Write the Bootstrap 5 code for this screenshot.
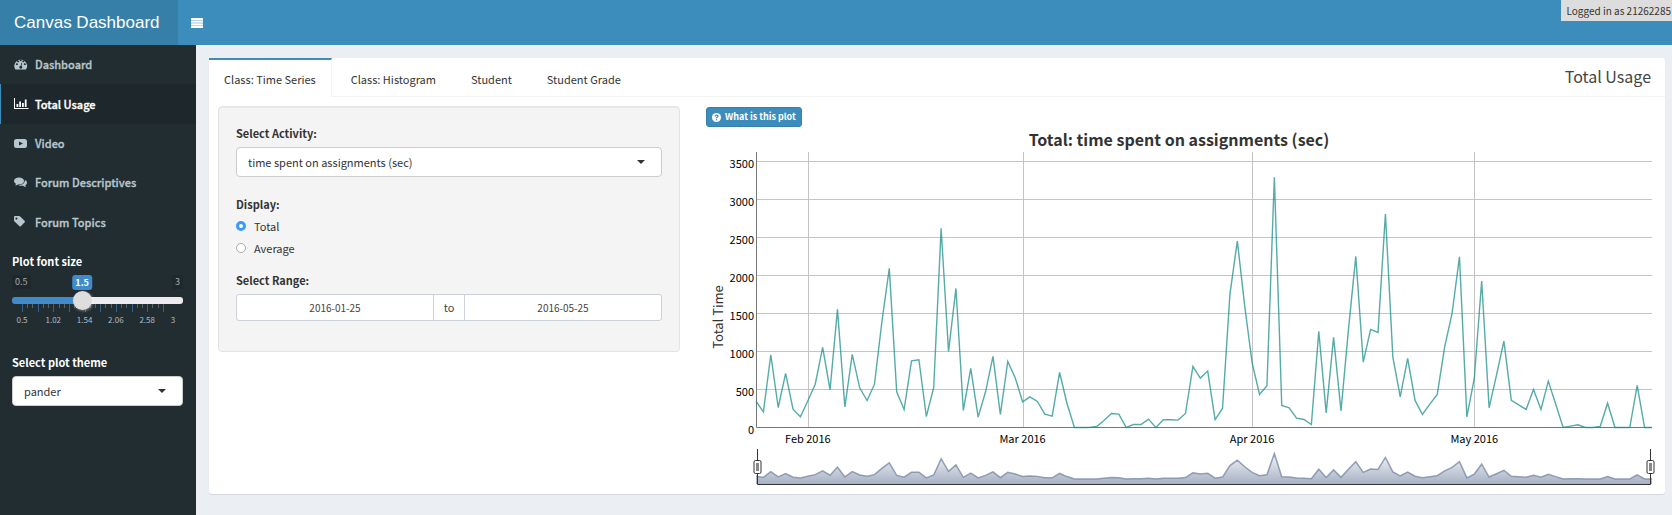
<!DOCTYPE html>
<html lang="en">
<head>
<meta charset="utf-8">
<meta name="viewport" content="width=device-width, initial-scale=1">
<title>Canvas Dashboard</title>
<link href="https://cdn.jsdelivr.net/npm/bootstrap@5.3.0/dist/css/bootstrap.min.css" rel="stylesheet">
<style>
  :root { --brand: #3c8dbc; --brand-dark: #367fa9; }
  body { font-family: "Noto Sans CJK SC", "Source Sans Pro", sans-serif; font-size: 11px; line-height: 18px; color: #333; background: #ebeef3; }
  .app-header { height: 45px; background: var(--brand); }
  .app-logo { width: 178px; background: var(--brand-dark); color: #fff; font: 17px/45px "Liberation Sans", Arial, sans-serif; padding-left: 14px; }
  .menu-toggle { color: #fff; padding: 0 13px; border: 0; background: none; }
  .login-note { background: #ddd; font-size: 10px; height: 21px; line-height: 21px; padding: 0 1px 0 5px; color: #333; }
  .app-side { width: 196px; background: #222d32; color: #fff; }
  .side-menu { height: 197px; }
  .side-menu a { color: #b8c7ce; font-weight: 500; -webkit-text-stroke: 0.3px; border-left: 1px solid transparent; padding-left: 13px; padding-bottom: 1px; text-decoration: none; }
  .side-menu a.active { color: #fff; background: #1e282c; border-left-color: var(--brand); }
  .side-menu svg { width: 15px; height: 13px; margin-right: 6px; flex: none; }
  .side-form { padding: 10px 13px 0 12px; }
  .side-form label, .filters .caption { font-weight: 700; display: block; }
  .side-form .theme-label { margin-top: 25px; }
  .pick { font-size: 11px; line-height: 18px; height: 30px; margin-top: 5px; padding: 0 30px 0 11px; border: 1px solid #ccc; border-radius: 4px; color: #333;
    background-image: url("data:image/svg+xml,%3Csvg xmlns='http://www.w3.org/2000/svg' viewBox='0 0 8 4'%3E%3Cpath d='M0 0h8L4 4z' fill='%23333'/%3E%3C/svg%3E");
    background-size: 8px 4px; background-position: right 16px center; }
  .scale-head { height: 16px; margin-top: 5px; font-size: 9px; line-height: 14px; color: #aaa; position: relative; }
  .scale-head span { background: #1e282c; border-radius: 3px; padding: 0 3px; height: 14px; }
  .scale-head output { position: absolute; top: 0; transform: translateX(-50%); background: #428bca; color: #fff; border-radius: 3px; padding: 0 3px; font-size: 9px; font-weight: 700; line-height: 15px; }
  .size-range { appearance: none; -webkit-appearance: none; display: block; width: 100%; height: 19px; margin: 0; background: none; position: relative; z-index: 1; }
  .size-range::-webkit-slider-runnable-track { height: 7px; border-radius: 3px; background: linear-gradient(to right, #428bca 40%, #edeaee 40%); }
  .size-range::-webkit-slider-thumb { -webkit-appearance: none; width: 19px; height: 19px; margin-top: -6px; border-radius: 50%; background: #dedede; box-shadow: 1px 1px 3px rgba(255,255,255,.4); }
  .ticks { display: block; width: 100%; height: 24px; margin-top: -6px; overflow: visible; }
  .panel-box { background: #fff; border-radius: 3px; box-shadow: 0 1px 1px rgba(0,0,0,.1); margin: 13px 7px 0 13px; }
  .panel-tabs { border-bottom: 1px solid #f4f4f4; height: 39px; }
  .panel-tabs .tab-link { border: 0; border-top: 2px solid transparent; border-right: 1px solid transparent; background: none; color: #333; padding: 9px 15px 10px; margin-right: 4px; height: 39px; line-height: 20px; }
  .panel-tabs .tab-link.active { border-top-color: var(--brand); border-right-color: #f4f4f4; background: #fff; }
  .panel-title { font-size: 16px; line-height: 36px; margin: 0 14px 0 auto; color: #444; font-weight: 400; }
  .panel-body { padding: 9px; }
  .panel-row { --bs-gutter-x: 26px; }
  .filters { background: #f4f4f4; border: 1px solid #e3e3e3; border-radius: 4px; padding: 17px 17px 30px; box-shadow: inset 0 1px 1px rgba(0,0,0,.05); }
  .filters .display-caption { margin-top: 18px; }
  .filters .display-group { padding: 2px 0 4px; }
  .filters .form-radio { height: 22px; }
  .filters input[type=radio] { appearance: none; width: 10px; height: 10px; margin: 0 8px 0 0; border: 1px solid #aaa; border-radius: 50%; background: #fff; }
  .filters input[type=radio]:checked { border: 3px solid #3b99fc; }
  .date-range { border: 1px solid #ccd0da; border-radius: 3px; background: #fff; height: 27px; margin-top: 5px; overflow: hidden; }
  .date-range input { border: 0; text-align: center; font-size: 10px; color: #444; min-width: 0; width: 0; background: none; padding: 0; }
  .date-range span { border: solid #ccd0da; border-width: 0 1px; width: 32px; line-height: 25px; text-align: center; color: #444; }
  .help-btn { background: var(--brand); border: 1px solid var(--brand-dark); color: #fff; border-radius: 3px; font-size: 9px; font-weight: 700; line-height: 18px; height: 20px; padding: 0 5px; margin-top: 1px; }
  .plot { display: block; width: 100%; height: 358px; }
  .plot text { font-size: 11px; fill: #000; }
  .plot .plot-title { font-size: 16px; font-weight: 700; fill: #333; }
  .plot .axis-title { font-size: 13px; fill: #333; }
</style>
</head>
<body>
<div class="d-flex flex-column min-vh-100">
  <header class="app-header d-flex">
    <div class="app-logo">Canvas Dashboard</div>
    <button class="menu-toggle d-flex align-items-center" type="button" aria-label="Toggle menu">
      <svg width="12" height="10" viewBox="0 0 12 10" fill="currentColor"><rect width="12" height="2.2" rx=".5"/><rect y="2.6" width="12" height="2.2" rx=".5"/><rect y="5.2" width="12" height="2.2" rx=".5"/><rect y="7.8" width="12" height="2.2" rx=".5"/></svg>
    </button>
    <div class="login-note ms-auto">Logged in as 21262285</div>
  </header>
  <div class="d-flex flex-grow-1">
    <aside class="app-side flex-shrink-0">
      <nav class="side-menu d-flex flex-column">
        <a href="#" class="d-flex flex-fill align-items-center"><svg viewBox="0 0 15 13"><path fill="currentColor" fill-rule="evenodd" d="M1.4 11.5A6.3 6.3 0 1 1 12 11.5zM2.9 7.1a.9.9 0 1 0-.01 0zM4.1 4.3a.9.9 0 1 0-.01 0zM6.7 3.2a.9.9 0 1 0-.01 0zM9.3 4.3a.9.9 0 1 0-.01 0zM10.8 7.1a.9.9 0 1 0-.01 0zM7.4 4.7 6.6 7.9a1.4 1.4 0 1 0 .9.2l.6-3.2z"/></svg>Dashboard</a>
        <a href="#" class="active d-flex flex-fill align-items-center"><svg viewBox="0 0 15 13"><path fill="currentColor" d="M0 1h1v10h13.500v1H0zM2.500 7h1.800v3H2.500zM5.200 4.500H7V10H5.200zM8 6h1.800v4H8zM10.800 2.500h1.800V10h-1.800z"/></svg>Total Usage</a>
        <a href="#" class="d-flex flex-fill align-items-center"><svg viewBox="0 0 15 13"><path fill="currentColor" fill-rule="evenodd" d="M2.500 2h8q2.500 0 2.500 2.500v4Q13 11 10.500 11h-8Q0 11 0 8.500v-4Q0 2 2.500 2zM5 4.500v4L9 6.500z"/></svg>Video</a>
        <a href="#" class="d-flex flex-fill align-items-center"><svg viewBox="0 0 15 13"><path fill="currentColor" d="M5 1.500c2.900 0 5 1.500 5 3.500S7.900 8.500 5 8.500l-1-.1C3 9.200 2 9.500 1 9.500c.5-.4.9-1 1-1.700C.8 7.100 0 6.100 0 5c0-2 2.200-3.500 5-3.500zM10.900 4c1.300.6 2.100 1.500 2.100 2.700 0 1-.7 1.900-1.700 2.600 0 .8.500 1.300 1 1.700-1.200 0-2.300-.4-3.200-1.200-1.900.2-3.400-.1-4.600-.6C8 9.200 11 7.400 10.900 4z"/></svg>Forum Descriptives</a>
        <a href="#" class="d-flex flex-fill align-items-center"><svg viewBox="0 0 15 13"><path fill="currentColor" fill-rule="evenodd" d="M0 2q0-1 1-1h4q.7 0 1.200.5l4.500 4.500q.6.700 0 1.300l-3.900 4q-.7.500-1.300 0L.5 6.500Q0 6 0 5.300zM2.400 2.500a1 1 0 1 0 .01 0z"/></svg>Forum Topics</a>
      </nav>
      <form class="side-form">
        <label for="size">Plot font size</label>
        <div class="scale-head d-flex justify-content-between"><span>0.5</span><output for="size" style="left:41%">1.5</output><span>3</span></div>
        <input class="size-range" type="range" id="size" min="0.5" max="3" step="0.1" value="1.5">
        <svg class="ticks" id="ticks"></svg>
        <label class="theme-label" for="theme">Select plot theme</label>
        <select class="form-select pick" id="theme"><option>pander</option></select>
      </form>
    </aside>
    <main class="flex-grow-1">
      <section class="panel-box">
        <div class="panel-tabs d-flex" role="tablist">
          <button class="tab-link active" type="button" role="tab">Class: Time Series</button>
          <button class="tab-link" type="button" role="tab">Class: Histogram</button>
          <button class="tab-link" type="button" role="tab">Student</button>
          <button class="tab-link" type="button" role="tab">Student Grade</button>
          <h1 class="panel-title">Total Usage</h1>
        </div>
        <div class="panel-body">
          <div class="row panel-row">
            <div class="col-4">
              <form class="filters">
                <label class="caption" for="activity">Select Activity:</label>
                <select class="form-select pick" id="activity"><option>time spent on assignments (sec)</option></select>
                <div class="caption display-caption" id="disp">Display:</div>
                <div class="display-group" role="radiogroup" aria-labelledby="disp">
                  <label class="form-radio d-flex align-items-center"><input type="radio" name="display" checked>Total</label>
                  <label class="form-radio d-flex align-items-center"><input type="radio" name="display">Average</label>
                </div>
                <label class="caption mt-2" for="from">Select Range:</label>
                <div class="date-range d-flex">
                  <input class="flex-fill" id="from" type="text" value="2016-01-25" aria-label="Start date">
                  <span>to</span>
                  <input class="flex-fill" type="text" value="2016-05-25" aria-label="End date">
                </div>
              </form>
            </div>
            <div class="col-8">
              <button class="help-btn d-flex align-items-center" type="button"><svg class="me-1" width="9" height="9" viewBox="0 0 10 10"><circle cx="5" cy="5" r="5" fill="#fff"/><path d="M3.300 3.800Q3.500 2.300 5 2.300T6.700 3.700Q6.700 4.600 5 5.400V6" fill="none" stroke="#3c8dbc" stroke-width="1.300"/><path d="M4.300 6.900h1.400v1.300H4.300z" fill="#3c8dbc"/></svg>What is this plot</button>
              <svg class="plot" id="plot" role="img" aria-label="Total time spent on assignments"></svg>
            </div>
          </div>
        </div>
      </section>
    </main>
  </div>
</div>
<script src="https://cdn.jsdelivr.net/npm/bootstrap@5.3.0/dist/js/bootstrap.bundle.min.js"></script>
<script>
  // Seconds spent per day, 25 January to 25 May 2016
  const series = [347,206,957,263,711,241,140,351,570,1053,496,1554,272,961,522,355,570,1391,2094,470,237,878,891,145,527,2620,1001,1830,224,777,136,470,935,171,869,654,338,
    404,342,176,149,724,316,0,0,0,13,92,184,176,0,40,40,110,0,101,101,97,184,803,650,742,105,250,1751,2453,1598,
    851,435,549,3292,290,259,123,105,40,1264,193,1185,219,1282,2251,860,1290,1251,2809,930,404,909,356,171,307,435,1062,1501,2247,140,
    645,1927,259,689,1137,356,298,237,500,237,610,307,0,18,35,0,0,13,320,0,0,0,553,0,0];
  const months = [[7, 'Feb 2016'], [36, 'Mar 2016'], [67, 'Apr 2016'], [97, 'May 2016']];

  function drawPlot() {
    const svg = document.getElementById('plot');
    const width = svg.clientWidth, left = 50, right = width - 4, base = 300, top = 25;
    const x = i => left + i * (right - left) / (series.length - 1);
    const y = v => base - v * 266 / 3500;
    let out = '';
    for (let v = 500; v <= 3500; v += 500)
      out += `<path d="M${left} ${Math.round(y(v)) + .5}H${right}" stroke="#c4c4c4"/>`;
    for (let v = 0; v <= 3500; v += 500)
      out += `<text x="${left - 2}" y="${y(v) + 7}" text-anchor="end">${v}</text>`;
    for (const [i, name] of months)
      out += `<path d="M${Math.round(x(i)) + .5} ${top}V${base}" stroke="#c4c4c4"/><text x="${x(i)}" y="316" text-anchor="middle">${name}</text>`;
    out += `<path d="M${left + .5} ${top}V${base + .5}H${right}" fill="none" stroke="#777"/>`;
    out += `<polyline points="${series.map((v, i) => x(i) + ',' + (y(v) + .5)).join(' ')}" fill="none" stroke="#1b8f8a" stroke-opacity=".75" stroke-width="1.400"/>`;
    out += `<text class="plot-title" x="${right / 2}" y="19" text-anchor="middle">Total: time spent on assignments (sec)</text>`;
    out += `<text class="axis-title" transform="translate(17 190) rotate(-90)" text-anchor="middle">Total Time</text>`;
    // Range selector
    const mini = series.map((v, i) => x(i) + ',' + (352 - v * 25.3 / 3292)).join(' ');
    out += `<defs><linearGradient id="fade" gradientUnits="userSpaceOnUse" x1="0" x2="0" y1="322" y2="357"><stop stop-color="#fff"/><stop offset="1" stop-color="#a7b1c4"/></linearGradient></defs>`;
    out += `<polygon points="${left},357 ${mini} ${right},357" fill="url(#fade)"/><polyline points="${mini}" fill="none" stroke="#808fab" stroke-opacity=".85" stroke-width="1.500"/>`;
    out += `<path d="M${left + 1.5} 322V357.500H${right - 1.5}V322" fill="none" stroke="#333"/>`;
    for (const hx of [left + 1, right - 2])
      out += `<rect x="${hx - 3}" y="333.500" width="7" height="13" rx="1.500" fill="#fff" stroke="#333"/><rect x="${hx - 1}" y="336" width="3" height="8" fill="#888"/>`;
    svg.innerHTML = out;
  }

  function drawTicks() {
    const svg = document.getElementById('ticks'), w = svg.clientWidth;
    let out = '';
    for (let n = 0; n <= 27; n++) {
      const px = Math.round(10 + n * w * .0305) + .5;
      out += n % 3 ? `<path d="M${px} 0v4" stroke="#55656c"/>` : `<path d="M${px} 0v8" stroke="#2f638e"/>`;
    }
    [0.5, 1.02, 1.54, 2.06, 2.58].forEach((v, i) => out += `<text x="${10 + i * w * .183}" y="19" text-anchor="middle">${v}</text>`);
    out += `<text x="${w - 10}" y="19" text-anchor="middle">3</text>`;
    svg.innerHTML = `<g font-size="8" fill="#aebdc3">${out}</g>`;
  }

  function draw() { drawPlot(); drawTicks(); }
  window.addEventListener('resize', draw);
  draw();
</script>
</body>
</html>
